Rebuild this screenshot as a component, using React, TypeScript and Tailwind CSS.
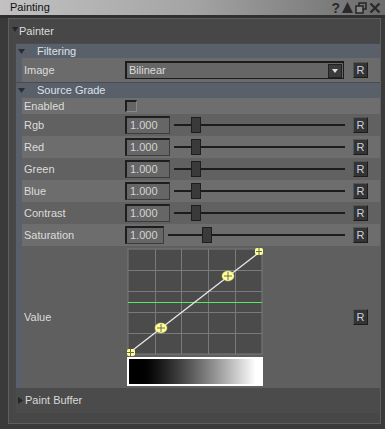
import React from "react";

const font = { fontFamily: '"Liberation Sans", Arial, sans-serif' };

function RButton() {
  return (
    <div className="w-[15px] h-[16px] bg-[#343434] border border-t-[#555] border-l-[#555] border-r-[#1c1c1c] border-b-[#1c1c1c] flex items-center justify-center text-[11px] leading-none text-[#c9d2e2] shrink-0">
      R
    </div>
  );
}

function NumField({ w }: { w: number }) {
  return (
    <div
      className="h-[18px] bg-[#666] border-t-2 border-l-2 border-r border-b border-t-[#1e1e1e] border-l-[#1e1e1e] border-r-[#3c3c3c] border-b-[#3c3c3c] flex items-center pl-[3px] text-[11px] text-[#d4d4d4] shrink-0"
      style={{ width: w }}
    >
      1.000
    </div>
  );
}

function Slider({ handle }: { handle: number }) {
  return (
    <div className="relative flex-1 h-[18px]">
      <div className="absolute left-0 right-0 top-[8px] h-[2px] bg-[#1c1c1c]" />
      <div
        className="absolute top-[1px] w-[10px] h-[16px] bg-[#3a3a3a] border border-[#1e1e1e]"
        style={{ left: handle }}
      />
    </div>
  );
}

function SliderRow({ label, light, fieldW = 45, gap = 4, handle = 17 }: { label: string; light: boolean; fieldW?: number; gap?: number; handle?: number }) {
  return (
    <div className={`flex items-center h-[22px] ${light ? "bg-[#6d6d6d]" : "bg-[#616161]"}`}>
      <div className="w-[103px] pl-[2px] text-[11px] text-[#dcdcdc]">{label}</div>
      <NumField w={fieldW} />
      <div className="flex-1 flex items-center" style={{ marginLeft: gap }}>
        <Slider handle={handle} />
      </div>
      <div className="ml-[8px] mr-[12px]">
        <RButton />
      </div>
    </div>
  );
}

function Header({ label, h }: { label: string; h: number }) {
  return (
    <div className="flex items-center bg-[#596069] border-t border-[#474c54] text-[11px] text-[#dde2ea]" style={{ height: h }}>
      <svg width="7" height="5" className="ml-[2px]" viewBox="0 0 7 5">
        <polygon points="0,0 7,0 3.5,5" fill="#2a2e34" />
      </svg>
      <span className="ml-[12px]">{label}</span>
    </div>
  );
}

function CtrlPoint({ x, y }: { x: number; y: number }) {
  return (
    <g>
      <ellipse cx={x} cy={y} rx={6} ry={5} fill="#ffff99" stroke="#d8d870" strokeWidth={0.5} />
      <line x1={x - 4} y1={y} x2={x + 4} y2={y} stroke="#6a6a50" strokeWidth={1} />
      <line x1={x} y1={y - 4} x2={x} y2={y + 4} stroke="#6a6a50" strokeWidth={1} />
    </g>
  );
}

function Curve() {
  const W = 136;
  const H = 108;
  const vx = [28, 54, 81, 108];
  const hy = [22, 43, 64, 85];
  return (
    <svg width={W} height={H} viewBox={`0 0 ${W} ${H}`} className="block">
      <rect x={1} y={1} width={134} height={105} fill="#4b4b4b" stroke="#7a7a7a" strokeWidth={1} />
      {vx.map((x) => (
        <line key={"v" + x} x1={x + 0.5} y1={1} x2={x + 0.5} y2={106} stroke="#7a7a7a" strokeWidth={1} />
      ))}
      {hy.map((y) => (
        <line key={"h" + y} x1={1} y1={y + 0.5} x2={135} y2={y + 0.5} stroke="#7a7a7a" strokeWidth={1} />
      ))}
      <line x1={1} y1={54.5} x2={135} y2={54.5} stroke="#5fe65f" strokeWidth={1.2} />
      <line x1={2} y1={105} x2={134} y2={3} stroke="#e8e8e8" strokeWidth={1.3} />
      <CtrlPoint x={34} y={80} />
      <CtrlPoint x={101} y={28} />
      <g>
        <rect x={128} y={0} width={8} height={7} rx={2} fill="#ffff99" />
        <line x1={129} y1={3.5} x2={135} y2={3.5} stroke="#6a6a50" />
        <line x1={132} y1={0} x2={132} y2={7} stroke="#6a6a50" />
      </g>
      <g>
        <rect x={0} y={101} width={8} height={7} rx={2} fill="#ffff99" />
        <line x1={0} y1={104.5} x2={7} y2={104.5} stroke="#6a6a50" />
        <line x1={3.5} y1={101} x2={3.5} y2={108} stroke="#6a6a50" />
      </g>
    </svg>
  );
}

export default function App() {
  return (
    <div className="w-[385px] h-[429px] bg-[#3a3a3a] flex flex-col overflow-hidden" style={font}>
      {/* title bar */}
      <div className="h-[15px] flex items-center bg-gradient-to-r from-[#c2c2c2] via-[#a4a4a4] to-[#6c6c6c] shrink-0">
        <span className="ml-[10px] text-[11px] text-[#111] leading-none">Painting</span>
        <div className="ml-auto mr-[4px] flex items-center gap-[2px]">
          <span className="text-[14px] font-bold leading-none text-[#2a2a2a]">?</span>
          <svg width="11" height="11" viewBox="0 0 11 11">
            <polygon points="5.5,0 11,11 0,11" fill="#2a2a2a" />
          </svg>
          <svg width="12" height="12" viewBox="0 0 12 12">
            <rect x="4" y="1" width="7" height="6" fill="none" stroke="#2a2a2a" strokeWidth="1.6" />
            <rect x="1" y="4" width="7" height="7" fill="#8a8a8a" stroke="#2a2a2a" strokeWidth="1.6" />
          </svg>
          <svg width="12" height="12" viewBox="0 0 12 12">
            <path d="M1.5 1.5 L10.5 10.5 M10.5 1.5 L1.5 10.5" stroke="#2a2a2a" strokeWidth="2.4" />
          </svg>
        </div>
      </div>
      <div className="h-[3px] bg-[#303030] shrink-0" />
      {/* main panel */}
      <div className="ml-[8px] mr-[4px] h-[406px] border border-[#5e5e5e] bg-[#474747] flex flex-col">
        <div className="h-[24px] flex items-center text-[11px] text-[#dcdcdc] shrink-0">
          <svg width="6" height="5" viewBox="0 0 6 5" className="ml-[3px] mb-[3px]">
            <polygon points="0,0 6,0 3,5" fill="#262626" />
          </svg>
          <span className="ml-[1px]">Painter</span>
        </div>
        <div className="ml-[7px] flex flex-col">
          <Header label="Filtering" h={15} />
          <div className="flex bg-[#596069]">
            <div className="w-[6px] shrink-0" />
            <div className="flex-1 flex items-center h-[24px] bg-[#6b6b6b]">
              <div className="w-[103px] pl-[2px] text-[11px] text-[#dcdcdc]">Image</div>
              <div className="flex-1 h-[18px] bg-[#666] border-2 border-r border-b border-[#1c1c1c] flex items-center text-[11px] text-[#dcdcdc]">
                <span className="ml-[2px]">Bilinear</span>
                <div className="ml-auto mr-[1px] w-[14px] h-[14px] bg-[#3b3b3b] border border-[#222] flex items-center justify-center">
                  <svg width="6" height="4" viewBox="0 0 6 4">
                    <polygon points="0,0 6,0 3,4" fill="#e0e0e0" />
                  </svg>
                </div>
              </div>
              <div className="ml-[9px] mr-[12px]">
                <RButton />
              </div>
            </div>
          </div>
          <Header label="Source Grade" h={16} />
          <div className="flex bg-[#596069]">
            <div className="w-[6px] shrink-0" />
            <div className="flex-1 flex flex-col">
              <div className="flex items-center h-[16px] bg-[#6e6e6e]">
                <div className="w-[103px] pl-[2px] text-[11px] text-[#dcdcdc]">Enabled</div>
                <div className="w-[12px] h-[12px] border-t-2 border-l-2 border-r border-b border-t-[#1e1e1e] border-l-[#1e1e1e] border-r-[#888] border-b-[#888] bg-[#656565]" />
              </div>
              <SliderRow label="Rgb" light={false} />
              <SliderRow label="Red" light={true} />
              <SliderRow label="Green" light={false} />
              <SliderRow label="Blue" light={true} />
              <SliderRow label="Contrast" light={false} />
              <SliderRow label="Saturation" light={true} fieldW={39} gap={4} handle={34} />
              <div className="flex h-[142px] bg-[#5f5f5f]">
                <div className="w-[105px] pl-[2px] text-[11px] text-[#dcdcdc] flex items-center">Value</div>
                <div className="flex flex-col pt-[2px]">
                  <Curve />
                  <div className="mt-[1px] w-[136px] h-[29px] border-2 border-white bg-gradient-to-r from-black from-[4%] to-white to-[96%]" />
                </div>
                <div className="flex-1" />
                <div className="flex items-center mr-[12px]">
                  <RButton />
                </div>
              </div>
            </div>
          </div>
          <div className="h-[25px] flex items-center bg-[#4b4b4b] text-[11px] text-[#d8d8d8]">
            <svg width="5" height="7" viewBox="0 0 5 7" className="ml-[2px]">
              <polygon points="0,0 5,3.5 0,7" fill="#262626" />
            </svg>
            <span className="ml-[2px]">Paint Buffer</span>
          </div>
        </div>
      </div>
    </div>
  );
}
